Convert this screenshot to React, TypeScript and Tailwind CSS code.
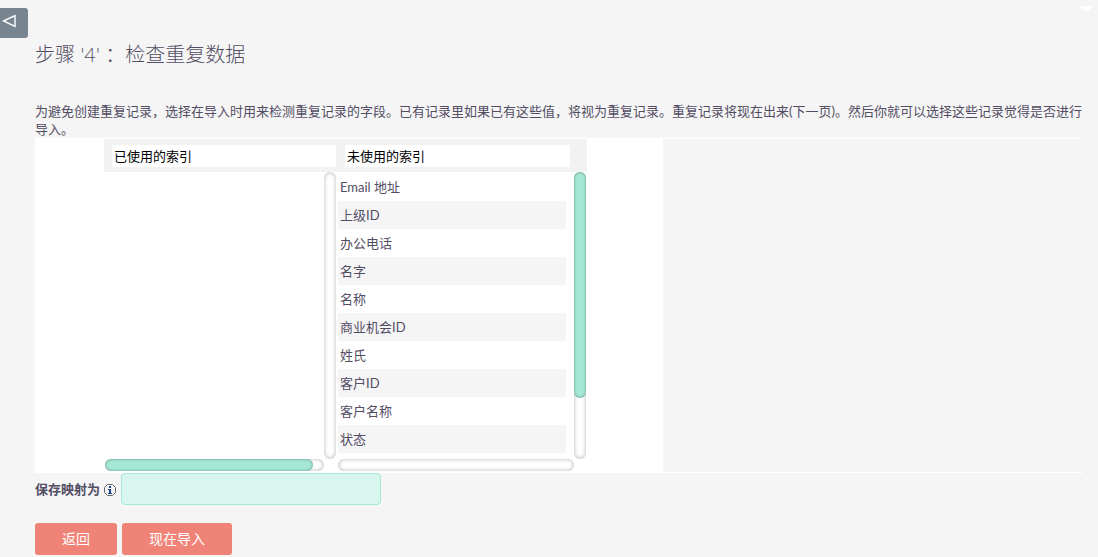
import { ReactNode } from 'react';

const unusedIndexes = [
    'Email 地址',
    '上级ID',
    '办公电话',
    '名字',
    '名称',
    '商业机会ID',
    '姓氏',
    '客户ID',
    '客户名称',
    '状态',
];

interface ScrollTrackProps {
    direction: "vertical" | "horizontal";
    className?: string;
    thumb?: string;
}

const ScrollTrack = (props: ScrollTrackProps) => {
    const size = props.direction === "vertical" ? 'w-3' : 'h-3';
    return (
        <div className={`${size} ${props.className ?? ''} rounded-full bg-white shadow-[inset_0_0_4px_rgba(0,0,0,0.3)]`}>
            {props.thumb && (
                <div className={`${props.thumb} rounded-full bg-[#a5e8d6] shadow-[inset_0_0_3px_rgba(0,0,0,0.4)]`}></div>
            )}
        </div>
    );
};

const ActionButton = ({ children }: { children: ReactNode }) => (
    <button type="button" className="h-8 rounded-[3px] bg-[#f08377] px-[27px] text-[14px] leading-8 text-white hover:cursor-pointer">
        {children}
    </button>
);

const InfoIcon = () => (
    <svg width="13" height="16" viewBox="0 0 13 16" fill="none">
        <path d="M3.5 3.5h5l3 3v5l-3 3h-5l-3-3v-5z" fill="#f4f4f4" stroke="#666" />
        <path d="M5 5h2v2H5zM4 8h3v4h1v1H4v-1h1V9H4z" fill="#1c3f94" />
    </svg>
);

const App = () => {
    return (
        <div lang="zh-CN" className="min-h-screen bg-[#f5f5f5] font-['Lato','Noto_Sans_CJK_SC',sans-serif] text-[13px] leading-[18px] text-[#534d64]">
            <header className="flex items-start justify-between pt-[6px] pr-1">
                <button type="button" aria-label="折叠" className="mt-[2px] h-[30px] w-7 rounded-r-[3px] bg-[#778591] pl-[2px]">
                    <svg width="14" height="14" viewBox="0 0 14 14" fill="none" className="mb-1">
                        <path d="M1.5 7 13 1.5v11z" stroke="#fff" strokeWidth="1.4" />
                    </svg>
                </button>
                <svg width="14" height="6" viewBox="0 0 14 6">
                    <path d="M0 0h14L7 6z" fill="#fff" />
                </svg>
            </header>

            <main className="pr-[15px] pl-[35px]">
                <h2 className="pt-1 pb-9 text-[20px] leading-6 font-light">步骤 '4' ：检查重复数据</h2>

                <p>
                    为避免创建重复记录，选择在导入时用来检测重复记录的字段。已有记录里如果已有这些值，将视为重复记录。重复记录将现在出来(下一页)。然后你就可以选择这些记录觉得是否进行导入。
                </p>

                <section className="border-y border-white">
                    <div className="w-full max-w-[628px] bg-white pb-px pl-[69px]">
                        <div className="w-[483px]">
                            <div className="flex gap-[9px] bg-[#f2f2f2] pt-[6px] pr-[17px] pb-[5px] pl-2 text-black">
                                <h3 className="h-[22px] w-56 bg-white pl-[2px] leading-[22px]">已使用的索引</h3>
                                <h3 className="h-[22px] flex-1 bg-white pl-[2px] leading-[22px]">未使用的索引</h3>
                            </div>
                            <div className="flex">
                                <div className="w-[232px] pl-px">
                                    <div className="flex h-[287px] justify-end">
                                        <ScrollTrack direction="vertical" />
                                    </div>
                                    <ScrollTrack direction="horizontal" className="mr-3" thumb="h-3 w-[208px]" />
                                </div>
                                <div className="flex-1 pr-px pl-[2px]">
                                    <div className="flex h-[287px] justify-between gap-2">
                                        <ul className="flex-1 pt-px">
                                            {unusedIndexes.map((name) => (
                                                <li key={name} className="h-7 bg-white pl-[2px] leading-7 even:bg-[#f5f5f5]">
                                                    {name}
                                                </li>
                                            ))}
                                        </ul>
                                        <ScrollTrack direction="vertical" thumb="h-[226px] w-3" />
                                    </div>
                                    <ScrollTrack direction="horizontal" className="mr-3" />
                                </div>
                            </div>
                        </div>
                    </div>
                </section>

                <form>
                    <div className="flex items-center gap-1">
                        <label htmlFor="save-map" className="font-bold">保存映射为</label>
                        <InfoIcon />
                        <input
                            id="save-map"
                            type="text"
                            className="h-8 w-[260px] rounded-[4px] border border-[#a5e8d6] bg-[#d8f5ee] px-2 outline-none"
                        />
                    </div>
                    <div className="flex gap-[5px] pt-[18px]">
                        <ActionButton>返回</ActionButton>
                        <ActionButton>现在导入</ActionButton>
                    </div>
                </form>
            </main>
        </div>
    );
};

export default App;
